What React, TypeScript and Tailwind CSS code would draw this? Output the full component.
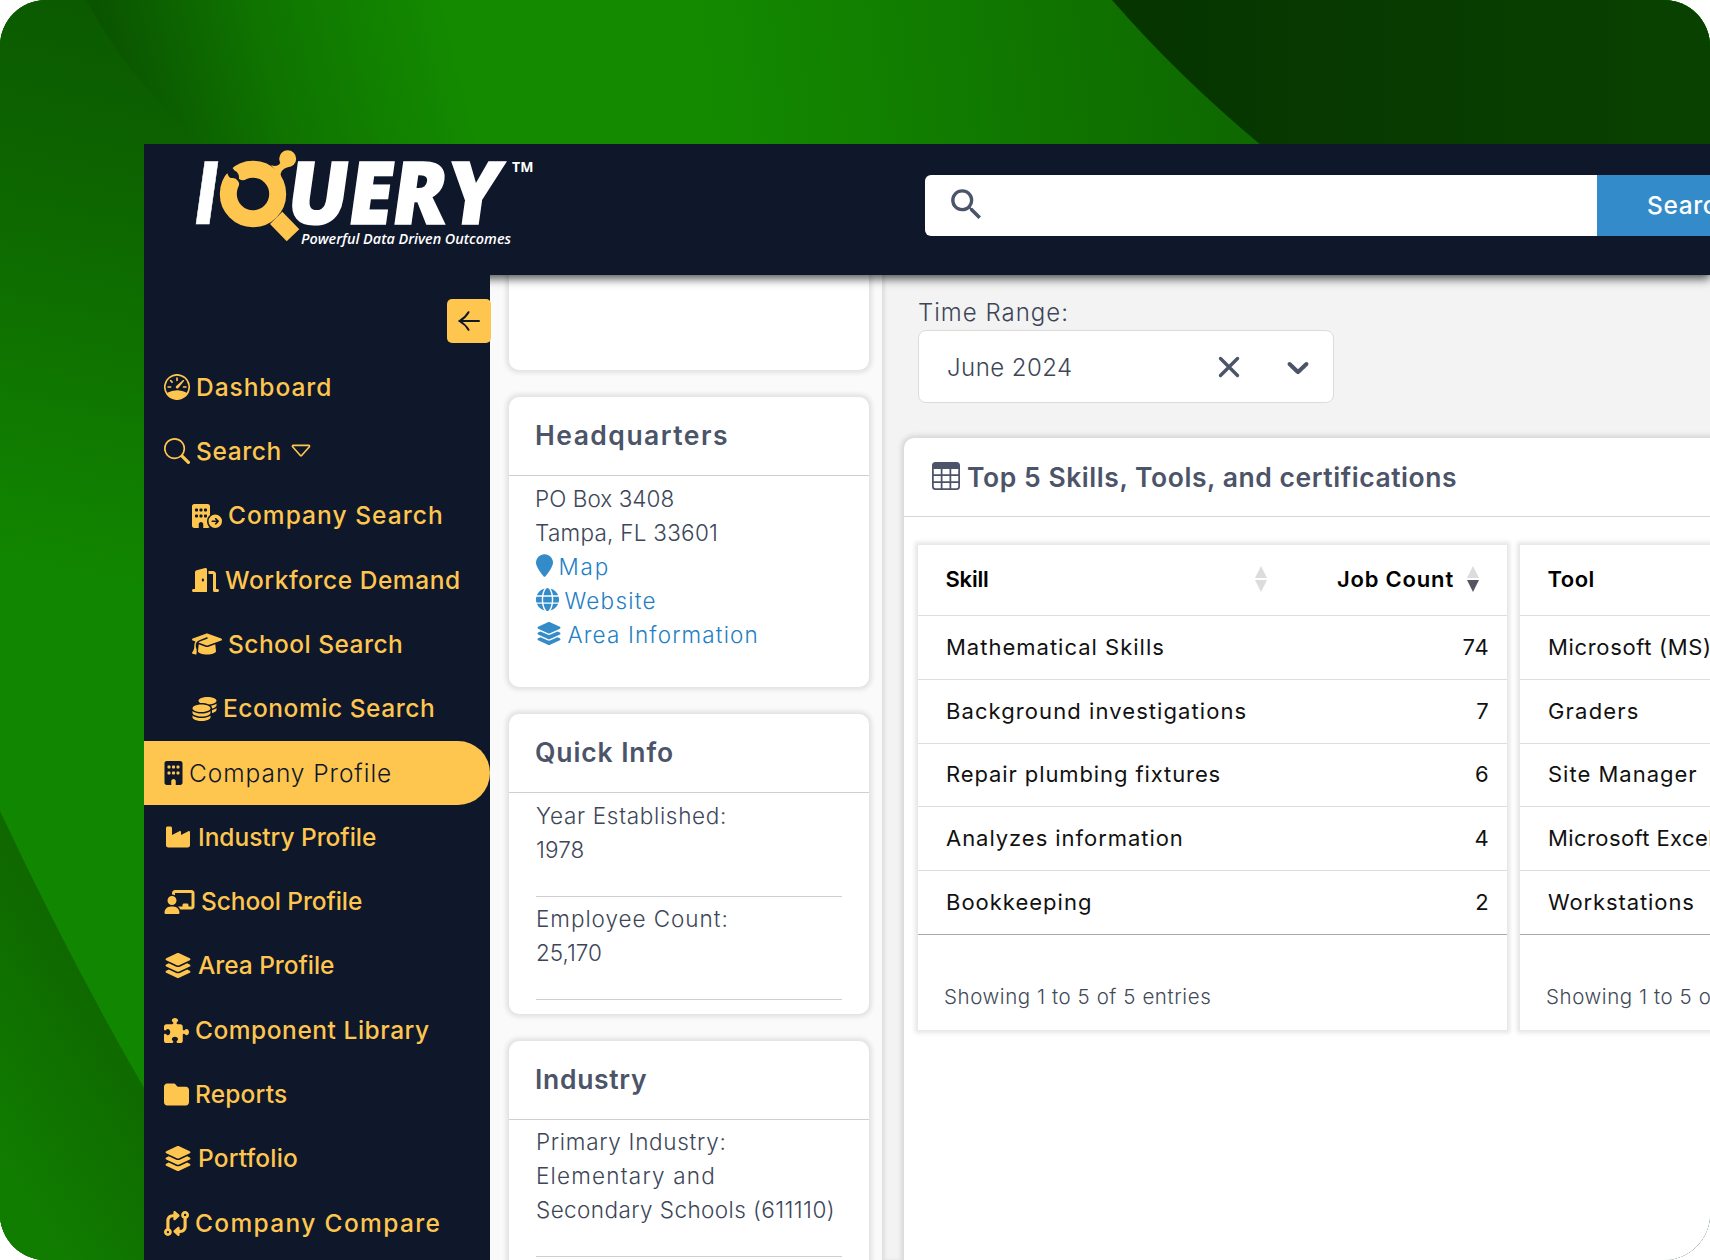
import React from "react";
import type { IconType } from "react-icons";
import { BsCaretDown, BsSearch, BsSpeedometer, BsTable } from "react-icons/bs";
import {
  FaBuilding,
  FaBuildingCircleArrowRight,
  FaChalkboardUser,
  FaCodeCompare,
  FaCoins,
  FaDoorOpen,
  FaFolder,
  FaGlobe,
  FaGraduationCap,
  FaIndustry,
  FaLayerGroup,
  FaLocationPin,
  FaPuzzlePiece,
} from "react-icons/fa6";
import { MdSearch } from "react-icons/md";

type NavEntry = {
  label: string;
  icon: IconType;
  tracking: string;
  size: string;
  nested?: boolean;
  active?: boolean;
  caret?: boolean;
};

const navEntries: NavEntry[] = [
  { label: "Dashboard", icon: BsSpeedometer, tracking: "tracking-[0.95px]", size: "h-[26px] w-[26px]" },
  { label: "Search", icon: BsSearch, tracking: "tracking-[0.6px]", size: "h-[26px] w-[26px]", caret: true },
  { label: "Company Search", icon: FaBuildingCircleArrowRight, tracking: "tracking-[1.05px]", size: "h-6 w-[30px]", nested: true },
  { label: "Workforce Demand", icon: FaDoorOpen, tracking: "tracking-[0.55px]", size: "h-6 w-[27px]", nested: true },
  { label: "School Search", icon: FaGraduationCap, tracking: "tracking-[0.46px]", size: "h-6 w-[30px]", nested: true },
  { label: "Economic Search", icon: FaCoins, tracking: "tracking-[0.54px]", size: "h-6 w-[25px]", nested: true },
  { label: "Company Profile", icon: FaBuilding, tracking: "tracking-[0.94px]", size: "h-6 w-[19px]", active: true },
  { label: "Industry Profile", icon: FaIndustry, tracking: "tracking-[-0.04px]", size: "h-6 w-[28px]" },
  { label: "School Profile", icon: FaChalkboardUser, tracking: "tracking-[-0.1px]", size: "h-6 w-[31px]" },
  { label: "Area Profile", icon: FaLayerGroup, tracking: "tracking-[-0.06px]", size: "h-[25px] w-[28px]" },
  { label: "Component Library", icon: FaPuzzlePiece, tracking: "tracking-[0.53px]", size: "h-[25px] w-[25px]" },
  { label: "Reports", icon: FaFolder, tracking: "tracking-[0.18px]", size: "h-[25px] w-[25px]" },
  { label: "Portfolio", icon: FaLayerGroup, tracking: "tracking-[0.16px]", size: "h-[25px] w-[28px]" },
  { label: "Company Compare", icon: FaCodeCompare, tracking: "tracking-[1.35px]", size: "h-[25px] w-[25px]" },
];

const skills = [
  { name: "Mathematical Skills", count: 74, tracking: "tracking-[1px]" },
  { name: "Background investigations", count: 7, tracking: "tracking-[1.08px]" },
  { name: "Repair plumbing fixtures", count: 6, tracking: "tracking-[0.9px]" },
  { name: "Analyzes information", count: 4, tracking: "tracking-[0.95px]" },
  { name: "Bookkeeping", count: 2, tracking: "tracking-[1px]" },
];

const tools = [
  { name: "Microsoft (MS) Office", count: 61, tracking: "tracking-[0.65px]" },
  { name: "Graders", count: 9, tracking: "tracking-[1.2px]" },
  { name: "Site Manager", count: 6, tracking: "tracking-[1px]" },
  { name: "Microsoft Excel", count: 5, tracking: "tracking-[0.4px]" },
  { name: "Workstations", count: 3, tracking: "tracking-[0.9px]" },
];

const Backdrop: React.FC = () => (
  <svg className="absolute inset-0 h-full w-full" viewBox="0 0 1710 1260" preserveAspectRatio="none">
    <defs>
      <linearGradient id="base" gradientUnits="userSpaceOnUse" x1="110" y1="60" x2="440" y2="-20">
        <stop offset="0" stopColor="#0a5400" />
        <stop offset="0.45" stopColor="#0f7400" />
        <stop offset="1" stopColor="#138a00" />
      </linearGradient>
      <linearGradient id="fade" gradientUnits="userSpaceOnUse" x1="700" y1="60" x2="1210" y2="0">
        <stop offset="0" stopColor="#0e6a00" stopOpacity="0" />
        <stop offset="1" stopColor="#0e6a00" />
      </linearGradient>
      <linearGradient id="left" gradientUnits="userSpaceOnUse" x1="120" y1="0" x2="0" y2="560">
        <stop offset="0" stopColor="#0b5900" />
        <stop offset="0.3" stopColor="#0d6400" />
        <stop offset="1" stopColor="#118600" />
      </linearGradient>
      <linearGradient id="leftLow" gradientUnits="userSpaceOnUse" x1="144" y1="1060" x2="0" y2="1150">
        <stop offset="0" stopColor="#0f6800" />
        <stop offset="1" stopColor="#107c00" />
      </linearGradient>
      <linearGradient id="corner" gradientUnits="userSpaceOnUse" x1="1150" y1="0" x2="1710" y2="0">
        <stop offset="0" stopColor="#063500" />
        <stop offset="1" stopColor="#094200" />
      </linearGradient>
    </defs>
    <rect width="1710" height="1260" fill="url(#base)" />
    <rect x="600" width="1110" height="144" fill="url(#fade)" />
    <path d="M0 0H86Q128 78 206 150H144V1260H0Z" fill="url(#left)" />
    <path d="M0 811Q70 960 144 1088V1260H0Z" fill="url(#leftLow)" />
    <path d="M1112 0Q1178 76 1262 146H1710V0Z" fill="url(#corner)" />
  </svg>
);

const Logo: React.FC = () => (
  <svg className="h-[110px] w-[350px]" viewBox="190 144 350 110">
    <g transform="translate(0 224) skewX(-8)" fill="#fff" stroke="#fff">
      <text x="190" y="0" fontFamily="Liberation Sans" fontWeight="700" fontSize="91" strokeWidth="0.5">
        I
      </text>
      <text
        x="284"
        y="0"
        fontFamily="Open Sans"
        fontWeight="800"
        fontSize="87"
        strokeWidth="1.5"
        textLength="213"
        lengthAdjust="spacingAndGlyphs"
      >
        UERY
      </text>
    </g>
    <g fill="#ffc64f">
      <circle cx="253" cy="194" r="24.7" fill="none" stroke="#ffc64f" strokeWidth="17" />
      <path d="M270 224L282.3 211.7L299.3 229.3L286.7 241.3Z" />
      <circle cx="287.7" cy="158.7" r="8.5" />
      <path d="M271 165Q279 168 281 161L288 167Q279 170 281 177Z" />
    </g>
    <path
      d="M225 172L227.500 173.500Q229 178.500 232 178Q236 177.500 237.500 180.500Q240.500 183 238 188L247.500 179Q243 181.500 239 179Q239.500 172.500 234.500 170.500L232.500 168L230 165Z"
      fill="#0f172a"
    />
    <text
      x="301"
      y="243.7"
      fill="#fff"
      fontFamily="Open Sans"
      fontStyle="italic"
      fontWeight="600"
      fontSize="14.5"
      textLength="210"
      lengthAdjust="spacingAndGlyphs"
    >
      Powerful Data Driven Outcomes
    </text>
    <text x="512" y="172" fill="#fff" fontFamily="Open Sans" fontWeight="700" fontSize="14" textLength="21.5">
      TM
    </text>
  </svg>
);

const Header: React.FC = () => (
  <header className="relative z-10 flex h-[131px] shrink-0 bg-[#0f172a] shadow-[0_4px_9px_rgba(0,0,0,0.65)]">
    <div className="w-[781px] shrink-0 pl-[46px]">
      <Logo />
    </div>
    <div className="mt-[30.5px] flex h-[61px] w-[672px] shrink-0 items-center rounded-l-[6px] bg-white pl-[21px] text-[#4b5468]">
      <MdSearch className="mt-[-2px] h-[41px] w-[41px]" />
    </div>
    <button className="mt-[30.5px] flex h-[61px] w-[170px] shrink-0 items-center bg-[#338bc9] pl-[50px] text-[24.5px] font-medium tracking-[0.6px] text-white">
      Search
    </button>
  </header>
);

const NavItem: React.FC<{ entry: NavEntry }> = ({ entry }) => {
  const Icon = entry.icon;
  return (
    <a
      className={`flex h-[64.3px] items-center gap-[6px] text-[24.5px] whitespace-nowrap ${entry.tracking} ${
        entry.nested ? "pl-12" : "pl-5"
      } ${entry.active ? "rounded-r-full bg-[#ffc64f] font-light text-[#0f172a]" : "font-medium text-[#ffc64f]"}`}
    >
      <Icon className={`shrink-0 ${entry.size}`} />
      <span>{entry.label}</span>
      {entry.caret && <BsCaretDown className="h-[26px] w-[26px]" />}
    </a>
  );
};

const Sidebar: React.FC = () => (
  <aside className="relative z-20 w-[346px] shrink-0 bg-[#0f172a] pt-6">
    <button className="ml-[303px] flex h-[44px] w-[44px] items-center justify-center rounded-[5px] bg-[#ffc64f] text-[#0f172a]">
      <svg className="h-[20px] w-[22px]" viewBox="0 0 22 20" fill="none" stroke="currentColor" strokeWidth="2" strokeLinecap="round">
        <path d="M21 10H2M10.5 1.2Q7.5 6.5 1.5 10Q7.5 13.500 10.5 18.800" />
      </svg>
    </button>
    <nav className="mt-[12px]">
      {navEntries.map((entry) => (
        <NavItem key={entry.label} entry={entry} />
      ))}
    </nav>
  </aside>
);

const InfoCard: React.FC<{ title: string; tracking: string; className: string; children: React.ReactNode }> = ({
  title,
  tracking,
  className,
  children,
}) => (
  <section className={`shrink-0 rounded-[10px] bg-white shadow-[0_0_4px_3px_#e2e2e2] ${className}`}>
    <h2
      className={`flex h-[79px] items-center border-b border-[#cfcfcf] pl-[26px] text-[26.5px] font-semibold text-[#4b5468] ${tracking}`}
    >
      {title}
    </h2>
    <div className="px-[26px] text-[22.5px] leading-[34px] font-light whitespace-nowrap text-[#3d4658]">{children}</div>
  </section>
);

const InfoBlock: React.FC<{ children: React.ReactNode }> = ({ children }) => (
  <div className="mr-[1px] ml-[1px] border-b border-[#cfcfcf] pt-[5.5px] pb-[29px]">{children}</div>
);

const InfoLink: React.FC<{ icon: IconType; label: string; tracking: string; size: string }> = ({
  icon: Icon,
  label,
  tracking,
  size,
}) => (
  <a className={`flex items-center gap-[5.5px] text-[#1f80c4] ${tracking}`}>
    <Icon className={`mt-[-2px] ml-[1px] text-[#338bc9] ${size}`} />
    {label}
  </a>
);

const CompanyColumn: React.FC = () => (
  <div className="flex w-[392px] shrink-0 flex-col gap-[27px] bg-[#fafafa] pr-[13px] pl-[19px]">
    <section className="h-[95px] shrink-0 rounded-b-[10px] bg-white shadow-[0_0_4px_3px_#e2e2e2]" />
    <InfoCard title="Headquarters" tracking="tracking-[1.48px]" className="h-[290px]">
      <div className="pt-[5.5px]">
        <p className="tracking-[0.06px]">PO Box 3408</p>
        <p className="tracking-[0.26px]">Tampa, FL 33601</p>
        <InfoLink icon={FaLocationPin} label="Map" tracking="tracking-[1.8px]" size="h-[23px] w-[17px]" />
        <InfoLink icon={FaGlobe} label="Website" tracking="tracking-[1.24px]" size="h-[23px] w-[23px]" />
        <InfoLink icon={FaLayerGroup} label="Area Information" tracking="tracking-[1.13px]" size="h-[23px] w-[26px]" />
      </div>
    </InfoCard>
    <InfoCard title="Quick Info" tracking="tracking-[0.88px]" className="h-[299.5px]">
      <InfoBlock>
        <p className="tracking-[0.69px]">Year Established:</p>
        <p className="tracking-[0.09px]">1978</p>
      </InfoBlock>
      <InfoBlock>
        <p className="tracking-[0.95px]">Employee Count:</p>
        <p>25,170</p>
      </InfoBlock>
    </InfoCard>
    <InfoCard title="Industry" tracking="tracking-[0.69px]" className="h-[300px]">
      <InfoBlock>
        <p className="tracking-[0.7px]">Primary Industry:</p>
        <p className="tracking-[1.2px]">Elementary and</p>
        <p className="tracking-[0.42px]">Secondary Schools (611110)</p>
      </InfoBlock>
    </InfoCard>
  </div>
);

const SortIcon: React.FC<{ descending?: boolean }> = ({ descending }) => (
  <svg className="h-[26px] w-[12px]" viewBox="0 0 12 26">
    <path d="M6 0L12 12H0Z" fill="#dcdcde" />
    <path d="M0 14H12L6 26Z" fill={descending ? "#55555f" : "#dcdcde"} />
  </svg>
);

type DataTableProps = {
  heading: string;
  headingTracking: string;
  rows: { name: string; count: number; tracking: string }[];
};

const DataTable: React.FC<DataTableProps> = ({ heading, headingTracking, rows }) => (
  <div className="flex h-[485px] w-[589px] shrink-0 flex-col bg-white whitespace-nowrap text-[#111] shadow-[0_0_4px_3px_#e6e6e6]">
    <div className="flex h-[71px] items-center border-b border-[#dedede] pr-[28px] pb-[2px] pl-[27.5px] text-[22px] font-semibold text-black">
      <span className={`w-[309px] ${headingTracking}`}>{heading}</span>
      <SortIcon />
      <span className="ml-auto pr-[13px] tracking-[0.82px]">Job Count</span>
      <SortIcon descending />
    </div>
    {rows.map((row) => (
      <div
        key={row.name}
        className="flex h-[63.8px] items-center justify-between border-b border-[#dedede] pr-[17.5px] pl-[28px] text-[22px] last-of-type:border-[#a9a9ad]"
      >
        <span className={row.tracking}>{row.name}</span>
        <span className="tracking-[0.8px]">{row.count}</span>
      </div>
    ))}
    <p className="pt-[47px] pl-[26px] text-[20.5px] leading-[30px] font-light tracking-[0.57px] text-[#3f4a58]">
      Showing 1 to 5 of 5 entries
    </p>
  </div>
);

const TimeRange: React.FC = () => (
  <div className="ml-[36px] w-[416px] text-[24px] font-light text-[#3d4658]">
    <label className="block pt-[20px] leading-[35px] tracking-[1px]">Time Range:</label>
    <div className="flex h-[73px] items-center rounded-[8px] border border-[#dcdcdc] bg-white pl-[28px]">
      <span className="w-[271px] pt-[2px] tracking-[0.45px]">June 2024</span>
      <svg className="h-[22px] w-[22px]" viewBox="0 0 22 22" stroke="#4b5468" strokeWidth="3.4" strokeLinecap="round">
        <path d="M2.5 2.5L19.5 19.500M19.500 2.500L2.500 19.500" />
      </svg>
      <svg className="ml-[40px] h-[36px] w-[36px]" viewBox="0 0 20 20" fill="#4b5468">
        <path d="M4.516 7.548c0.436-0.446 1.043-0.481 1.576 0l3.908 3.747 3.908-3.747c0.533-0.481 1.141-0.446 1.574 0 0.436 0.445 0.408 1.197 0 1.615-0.406 0.418-4.695 4.502-4.695 4.502-0.217 0.223-0.502 0.335-0.787 0.335s-0.57-0.112-0.789-0.335c0 0-4.287-4.084-4.695-4.502s-0.436-1.17 0-1.615z" />
      </svg>
    </div>
  </div>
);

const MainPanel: React.FC = () => (
  <main className="flex min-w-0 flex-1 flex-col bg-[#f3f3f3] shadow-[inset_3px_0_3px_#e0e0e0]">
    <TimeRange />
    <section className="mt-[35px] ml-[22px] flex w-[1300px] flex-1 flex-col rounded-tl-[10px] bg-white shadow-[0_0_4px_3px_#d9d9d9]">
      <h2 className="flex h-[79px] shrink-0 items-center gap-[7px] border-b border-[#d6d6d6] pl-[28px] text-[26.5px] font-semibold tracking-[0.55px] text-[#4b5468]">
        <BsTable className="mt-[-2px] h-[28px] w-[28px]" />
        <span className="pt-[1px]">Top 5 Skills, Tools, and certifications</span>
      </h2>
      <div className="flex gap-[13px] pt-[28px] pl-[14px]">
        <DataTable heading="Skill" headingTracking="tracking-[-0.21px]" rows={skills} />
        <DataTable heading="Tool" headingTracking="tracking-[0.47px]" rows={tools} />
      </div>
    </section>
  </main>
);

export default function App() {
  return (
    <div className="relative h-[1260px] w-[1710px] overflow-hidden rounded-[46px] bg-[#0f7400] pt-[144px] pl-[144px] font-['Inter',sans-serif]">
      <Backdrop />
      <div className="relative flex h-[1116px] w-[1566px] flex-col overflow-hidden bg-[#0f172a]">
        <Header />
        <div className="flex min-h-0 flex-1">
          <Sidebar />
          <CompanyColumn />
          <MainPanel />
        </div>
      </div>
    </div>
  );
}
